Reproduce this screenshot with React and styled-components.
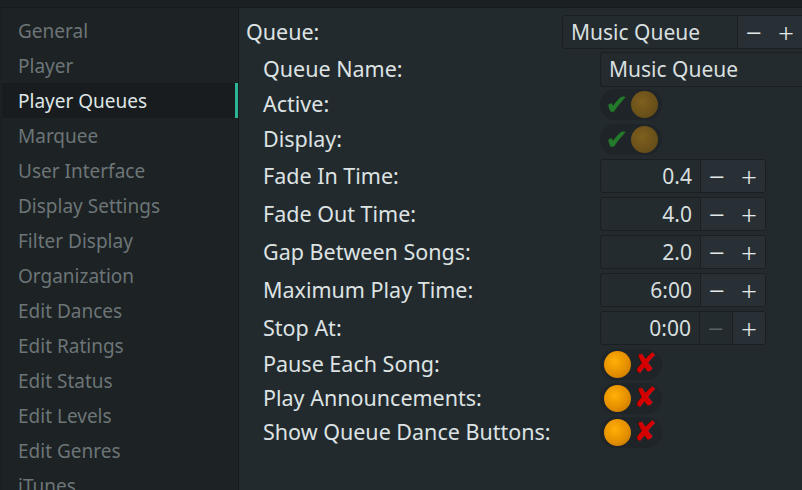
import React from 'react';
import styled, { createGlobalStyle } from 'styled-components';

const Global = createGlobalStyle`
  html, body { margin: 0; padding: 0; background: #1b2022; }
  body { font-family: "Noto Sans", "Open Sans", sans-serif; overflow: hidden; }
`;

const Window = styled.div`
  width: 802px;
  height: 490px;
  box-sizing: border-box;
  padding-top: 7px;
  display: flex;
  flex-direction: column;
  background: #1b2022;
`;

const Body = styled.div`
  flex: 1;
  display: flex;
  border-top: 1px solid #171b1d;
  min-height: 0;
`;

const Sidebar = styled.ul`
  list-style: none;
  margin: 0 0 0 2px;
  padding: 5px 0 0;
  width: 237px;
  box-sizing: border-box;
  background: #1d2224;
  border-right: 1px solid #171b1d;
  overflow: hidden;
`;

const NavItem = styled.li`
  height: 35px;
  display: flex;
  align-items: center;
  padding-left: 16px;
  box-sizing: border-box;
  font-size: 19px;
  color: ${p => (p.active ? '#dfe6e6' : '#6c7577')};
  background: ${p => (p.active ? '#181c1e' : 'transparent')};
  box-shadow: ${p => (p.active ? 'inset -3px 0 0 #2bb594' : 'none')};
`;

const Main = styled.div`
  flex: 1;
  background: #232a2e;
  padding: 7px 0 0 7px;
  display: flex;
  flex-direction: column;
  color: #dde3e3;
  font-size: 21.5px;
  overflow: hidden;
`;

const HeaderRow = styled.div`
  height: 34px;
  display: flex;
  align-items: center;
  justify-content: space-between;
  margin-bottom: 3px;
`;

const Row = styled.div`
  height: ${p => p.h}px;
  display: grid;
  grid-template-columns: 337px 1fr;
  align-items: center;
  padding-left: 17px;
`;

const Label = styled.span`
  color: #dde3e3;
  white-space: nowrap;
  line-height: 1.2;
  padding-bottom: 1px;
`;

const Field = styled.div`
  display: flex;
  height: ${p => p.h || 34}px;
  box-sizing: border-box;
  width: ${p => p.w}px;
  border: 1px solid #1a1f22;
  border-radius: 3px;
  background: #242b2f;
  overflow: hidden;
  ${p => p.open && 'border-right: none; border-radius: 3px 0 0 3px;'}
`;

const FieldText = styled.div`
  flex: 1;
  display: flex;
  align-items: center;
  justify-content: ${p => (p.right ? 'flex-end' : 'flex-start')};
  padding: ${p => (p.right ? '0 8px 1px 0' : '0 0 1px 8px')};
  color: #d8dfdf;
  font-size: 21px;
`;

const Buttons = styled.div`
  display: flex;
  border-left: 1px solid #1a1f22;
  background: #283035;
`;

const StepBtn = styled.div`
  width: ${p => p.w || 32}px;
  display: flex;
  align-items: center;
  justify-content: center;
  font-size: 28px;
  font-weight: 300;
  line-height: 30px;
  color: ${p => (p.disabled ? '#5b6365' : '#e4e9e9')};
  background: ${p => (p.disabled ? '#242b2f' : '#283035')};
  border-right: ${p => (p.disabled ? '1px solid #1a1f22' : 'none')};
`;

const Pill = styled.div`
  width: 62px;
  height: 31px;
  border-radius: 16px;
  background: #1e2427;
  display: flex;
  align-items: center;
  justify-content: space-between;
  padding: 0 4px;
  box-sizing: border-box;
`;

const Knob = styled.div`
  width: 27px;
  height: 27px;
  border-radius: 50%;
  background: ${p =>
    p.dim
      ? 'radial-gradient(circle at 40% 40%, #7e5f1e, #5c4616)'
      : 'radial-gradient(circle at 40% 38%, #ffb007, #e48f00 55%, #b86e00)'};
`;

const Mark = styled.span`
  width: 26px;
  text-align: center;
  font-size: 28px;
  font-weight: bold;
  line-height: 1;
  color: ${p => (p.on ? '#237a2a' : '#d40000')};
  font-family: "DejaVu Sans", sans-serif;
`;

const nav = [
  'General', 'Player', 'Player Queues', 'Marquee', 'User Interface', 'Display Settings',
  'Filter Display', 'Organization', 'Edit Dances', 'Edit Ratings', 'Edit Status',
  'Edit Levels', 'Edit Genres', 'iTunes',
];

const Toggle = ({ on }) => (
  <Pill>
    {on ? <Mark on>✔</Mark> : <Knob />}
    {on ? <Knob dim /> : <Mark>✘</Mark>}
  </Pill>
);

const Spin = ({ value, minDisabled }) => (
  <Field w={166}>
    <FieldText right>{value}</FieldText>
    <Buttons>
      <StepBtn disabled={minDisabled}>−</StepBtn>
      <StepBtn>+</StepBtn>
    </Buttons>
  </Field>
);

const spins = [
  ['Fade In Time:', '0.4'],
  ['Fade Out Time:', '4.0'],
  ['Gap Between Songs:', '2.0'],
  ['Maximum Play Time:', '6:00'],
  ['Stop At:', '0:00', true],
];

export default function App() {
  return (
    <Window>
      <Global />
      <Body>
        <Sidebar>
          {nav.map(n => (
            <NavItem key={n} active={n === 'Player Queues'}>{n}</NavItem>
          ))}
        </Sidebar>
        <Main>
          <HeaderRow>
            <Label>Queue:</Label>
            <Field w={240} open>
              <FieldText>Music Queue</FieldText>
              <Buttons>
                <StepBtn>−</StepBtn>
                <StepBtn>+</StepBtn>
              </Buttons>
            </Field>
          </HeaderRow>
          <Row h={35}>
            <Label>Queue Name:</Label>
            <Field w={210} h={35} open>
              <FieldText>Music Queue</FieldText>
            </Field>
          </Row>
          <Row h={35}>
            <Label>Active:</Label>
            <Toggle on />
          </Row>
          <Row h={35}>
            <Label>Display:</Label>
            <Toggle on />
          </Row>
          {spins.map(([l, v, d]) => (
            <Row h={38} key={l}>
              <Label>{l}</Label>
              <Spin value={v} minDisabled={d} />
            </Row>
          ))}
          <Row h={34}>
            <Label>Pause Each Song:</Label>
            <Toggle />
          </Row>
          <Row h={34}>
            <Label>Play Announcements:</Label>
            <Toggle />
          </Row>
          <Row h={34}>
            <Label>Show Queue Dance Buttons:</Label>
            <Toggle />
          </Row>
        </Main>
      </Body>
    </Window>
  );
}
